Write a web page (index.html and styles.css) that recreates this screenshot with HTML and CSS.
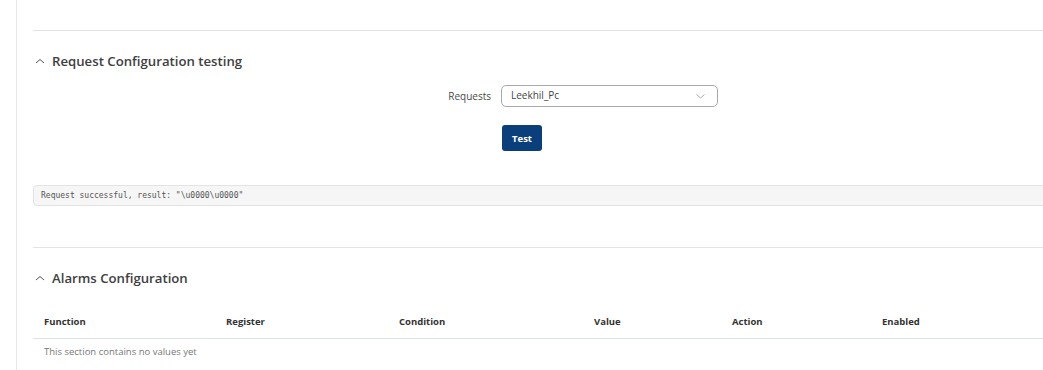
FILE: index.html
```html
<!DOCTYPE html>
<html lang="en">
<head>
    <meta charset="UTF-8">
    <meta name="viewport" content="width=device-width, initial-scale=1.0">
    <title>Modbus Requests</title>
    <link rel="stylesheet" href="styles.css">
</head>
<body>
    <div class="page">
        <div class="content">
            <div class="section first">
                <h2 class="section-title">
                    <svg class="chevron" width="10" height="6" viewBox="0 0 10 6"><path d="M1 5 L5 1.5 L9 5" fill="none" stroke="#555" stroke-width="1"/></svg>
                    Request Configuration testing
                </h2>
                <div class="form-row">
                    <label class="form-label">Requests</label>
                    <div class="select">
                        <span>Leekhil_Pc</span>
                        <svg width="9" height="5" viewBox="0 0 9 5"><path d="M0.5 0.5 L4.5 4 L8.5 0.5" fill="none" stroke="#aaa" stroke-width="1"/></svg>
                    </div>
                </div>
                <div class="form-row">
                    <span class="form-label"></span>
                    <button class="btn">Test</button>
                </div>
                <pre class="result">Request successful, result: "\u0000\u0000"</pre>
            </div>

            <div class="section">
                <h2 class="section-title">
                    <svg class="chevron" width="10" height="6" viewBox="0 0 10 6"><path d="M1 5 L5 1.5 L9 5" fill="none" stroke="#555" stroke-width="1"/></svg>
                    Alarms Configuration
                </h2>
                <div class="table">
                    <div class="thead">
                        <div>Function</div>
                        <div>Register</div>
                        <div>Condition</div>
                        <div>Value</div>
                        <div>Action</div>
                        <div>Enabled</div>
                    </div>
                    <div class="empty">This section contains no values yet</div>
                </div>
            </div>
        </div>
    </div>
</body>
</html>
```

FILE: styles.css
```css
body {
    margin: 0;
    background: #fff;
    font-family: "Open Sans", sans-serif;
    color: #404040;
    overflow: hidden;
}
.page {
    margin-left: 16px;
    border-left: 1px solid #e6e6e6;
    height: 370px;
    padding-left: 16px;
}
.content {
    width: 1120px;
    padding-top: 30px;
}
.section {
    border-top: 1px solid #e3e3e3;
}
.section.first {
    padding-bottom: 41px;
}
.section-title {
    display: flex;
    align-items: center;
    gap: 7px;
    margin: 0;
    padding: 21px 0 0 2px;
    height: 18px;
    font-size: 13.2px;
    font-weight: 600;
    color: #404040;
}
.form-row {
    display: flex;
    align-items: center;
    margin-top: 15px;
}
.form-row + .form-row {
    margin-top: 18px;
}
.form-label {
    width: 458px;
    text-align: right;
    font-size: 10px;
    color: #4a4a4a;
    padding-right: 10px;
}
.select {
    width: 194px;
    height: 20px;
    border: 1px solid #a9a9a9;
    border-radius: 5px;
    display: flex;
    align-items: center;
    justify-content: space-between;
    padding: 0 12px 0 9px;
    font-size: 10px;
    color: #444;
}
.select span {
    margin-top: -2px;
}
.btn {
    margin-left: 1px;
    width: 40px;
    height: 26px;
    border: none;
    border-radius: 3px;
    background: #0b3f7c;
    color: #fff;
    font-family: "Open Sans", sans-serif;
    font-size: 9.5px;
    font-weight: 700;
    padding: 0;
}
.result {
    margin: 34px 0 0 0;
    height: 19px;
    line-height: 20px;
    background: #f6f6f6;
    border: 1px solid #e3e3e3;
    border-radius: 4px;
    padding: 0 7px;
    font-family: "DejaVu Sans Mono", monospace;
    font-size: 8px;
    color: #555;
}
.table {
    margin-top: 17px;
}
.thead {
    display: grid;
    grid-template-columns: 182px 173px 195px 138px 150px 1fr;
    border-bottom: 1px solid #dde3ea;
    height: 34px;
    align-items: center;
}
.thead div {
    padding-left: 11px;
    font-size: 9.5px;
    font-weight: 700;
    color: #333;
}
.empty {
    padding: 6px 0 0 11px;
    font-size: 9.5px;
    color: #777;
}
```
